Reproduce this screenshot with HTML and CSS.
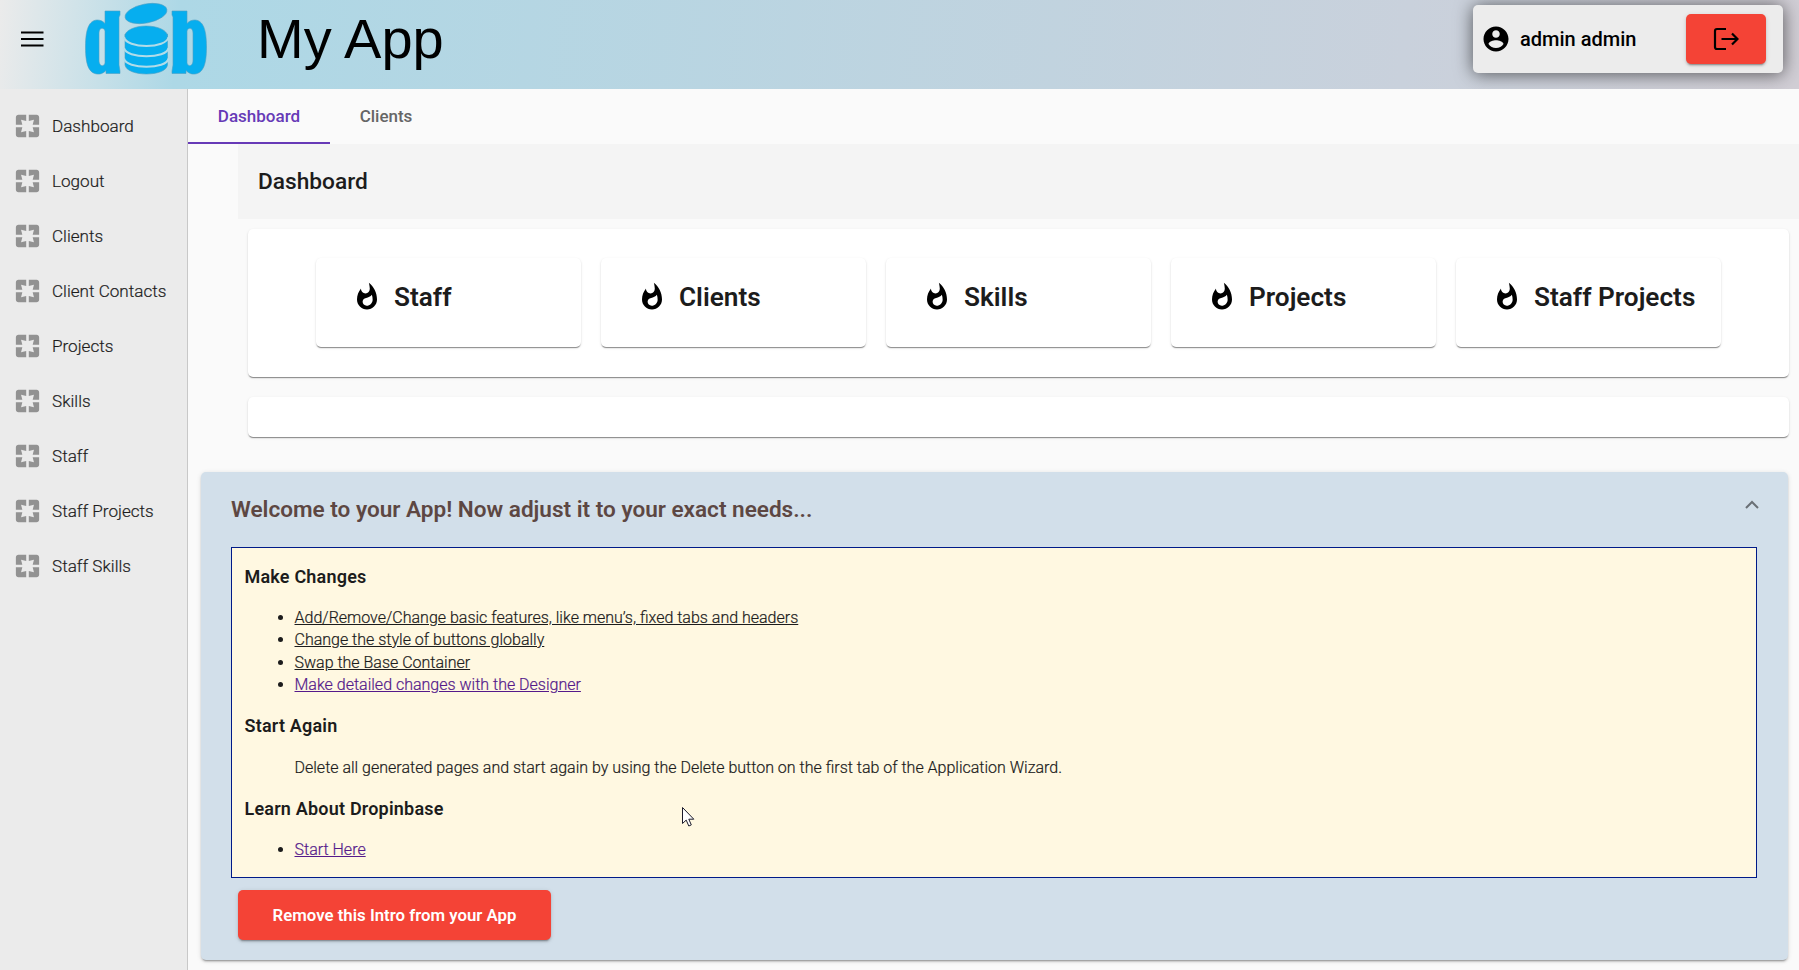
FILE: index.html
```html
<!DOCTYPE html>
<html lang="en">
<head>
<meta charset="utf-8">
<title>My App</title>
<link rel="stylesheet" href="styles.css">
</head>
<body>
<svg class="defs" width="0" height="0">
  <symbol id="pages" viewBox="0 0 24 24" preserveAspectRatio="none"><path d="M3 5v6h5L7 7l4 1V3H5c-1.100 0-2 .9-2 2zm5 8H3v6c0 1.100.9 2 2 2h6v-5l-4 1 1-4zm9 4l-4-1v5h6c1.100 0 2-.9 2-2v-6h-5l1 4zm2-14h-6v5l4-1-1 4h5V5c0-1.100-.9-2-2-2z"/></symbol>
  <symbol id="fire" viewBox="0 0 24 24"><path d="M13.500.67s.74 2.650.74 4.800c0 2.060-1.350 3.730-3.410 3.730-2.070 0-3.630-1.670-3.630-3.730l.03-.36C5.210 7.510 4 10.620 4 14c0 4.420 3.580 8 8 8s8-3.580 8-8C20 8.610 17.410 3.800 13.500.67zM11.710 19c-1.780 0-3.220-1.400-3.220-3.140 0-1.620 1.050-2.760 2.810-3.120 1.770-.36 3.600-1.210 4.620-2.580.39 1.290.59 2.650.59 4.040 0 2.650-2.150 4.800-4.800 4.800z"/></symbol>
</svg>
<header class="header">
  <svg class="burger" width="24" height="18" viewBox="0 0 24 18"><path d="M1 .500h22.500v2H1zM1 7h22.500v2H1zM1 13.500h22.500v2H1z"/></svg>
  <svg class="logo" width="124" height="76" viewBox="84 0 124 76">
    <g fill="#06aeef" stroke="#4a9fc4" stroke-width=".6">
      <path fill-rule="evenodd" d="M105 11h15v4l-1 2v48l1 6v2.500h-14v-3c-3 3-6 4-9 3.500-8-1-11.500-9-11.500-27S89 20.500 97 20c3 0 6 1 8 3.500zM105 31c-1-4-6-4-6 2v27c0 7 5 7 6 3z"/>
      <path fill-rule="evenodd" d="M187 11h-15v4l1 2v48l-1 6v2.500h14v-3c3 3 6 4 9 3.500 8-1 11.500-9 11.500-27S203 20.500 195 20c-3 0-6 1-8 3.500zM187 31c1-4 6-4 6 2v27c0 7-5 7-6 3z"/>
      <path d="M125 34v31c2 12 41 12 42.500 0V34z"/>
      <ellipse cx="146.200" cy="36" rx="21.200" ry="10"/>
      <ellipse cx="146" cy="13.500" rx="21.200" ry="9.500" transform="rotate(-11 146 13.500)"/>
    </g>
    <g fill="none" stroke="#b1dce9" stroke-width="2">
      <path d="M124 37c2 12 43 12 44.500 0M124 48c2 11 43 11 44.500 0M124 58.500c2 11 43 11 44.500 0"/>
    </g>
  </svg>
  <h1 class="app-name">My App</h1>
  <div class="user">
    <svg width="30" height="30" viewBox="0 0 24 24"><path d="M12 2C6.480 2 2 6.480 2 12s4.480 10 10 10 10-4.480 10-10S17.520 2 12 2zm0 3c1.660 0 3 1.340 3 3s-1.340 3-3 3-3-1.340-3-3 1.340-3 3-3zm0 14.200c-2.500 0-4.710-1.280-6-3.220.03-1.990 4-3.080 6-3.080 1.990 0 5.970 1.090 6 3.080-1.290 1.940-3.500 3.220-6 3.220z"/></svg>
    <span class="user-name">admin admin</span>
    <button class="logout"><svg width="26" height="24" viewBox="0 0 26 24"><path d="M13 2H4a2 2 0 0 0-2 2v16a2 2 0 0 0 2 2h9M8.500 12H25M19 6.500l5.500 5.500-5.500 5.500" fill="none" stroke="#000" stroke-width="2.200"/></svg></button>
  </div>
</header>
<div class="body">
  <nav class="side">
    <a class="item"><svg><use href="#pages"/></svg><span>Dashboard</span></a>
    <a class="item"><svg><use href="#pages"/></svg><span>Logout</span></a>
    <a class="item"><svg><use href="#pages"/></svg><span>Clients</span></a>
    <a class="item"><svg><use href="#pages"/></svg><span>Client Contacts</span></a>
    <a class="item"><svg><use href="#pages"/></svg><span>Projects</span></a>
    <a class="item"><svg><use href="#pages"/></svg><span>Skills</span></a>
    <a class="item"><svg><use href="#pages"/></svg><span>Staff</span></a>
    <a class="item"><svg><use href="#pages"/></svg><span>Staff Projects</span></a>
    <a class="item"><svg><use href="#pages"/></svg><span>Staff Skills</span></a>
  </nav>
  <main class="main">
    <div class="tabs"><a class="tab active">Dashboard</a><a class="tab">Clients</a></div>
    <section class="dash">
      <h2 class="title">Dashboard</h2>
      <div class="card cards">
        <div class="card tile"><svg><use href="#fire"/></svg><span>Staff</span></div>
        <div class="card tile"><svg><use href="#fire"/></svg><span>Clients</span></div>
        <div class="card tile"><svg><use href="#fire"/></svg><span>Skills</span></div>
        <div class="card tile"><svg><use href="#fire"/></svg><span>Projects</span></div>
        <div class="card tile"><svg><use href="#fire"/></svg><span>Staff Projects</span></div>
      </div>
      <div class="card empty"></div>
    </section>
    <section class="panel">
      <div class="panel-head">
        <h2>Welcome to your App! Now adjust it to your exact needs...</h2>
        <svg width="16" height="10" viewBox="0 0 16 10"><path d="M2 8l6-6 6 6" fill="none" stroke="#6a7076" stroke-width="2"/></svg>
      </div>
      <div class="note">
        <h3>Make Changes</h3>
        <ul>
          <li><a>Add/Remove/Change basic features, like menu’s, fixed tabs and headers</a></li>
          <li><a>Change the style of buttons globally</a></li>
          <li><a>Swap the Base Container</a></li>
          <li><a class="visited">Make detailed changes with the Designer</a></li>
        </ul>
        <h3>Start Again</h3>
        <p>Delete all generated pages and start again by using the Delete button on the first tab of the Application Wizard.</p>
        <h3>Learn About Dropinbase</h3>
        <ul><li><a class="visited">Start Here</a></li></ul>
      </div>
      <button class="remove">Remove this Intro from your App</button>
    </section>
  </main>
</div>
<svg class="cursor" width="13" height="20" viewBox="0 0 13 20"><path d="M.5.500v16l3.700-3.400 2.600 5.900 2.500-1.100-2.500-5.700h5z" fill="#fff" stroke="#1b1b2b"/></svg>
</body>
</html>
```
FILE: styles.css
```css
* { box-sizing: border-box; }
body { margin: 0; height: 970px; overflow: hidden; background: #fafafa; color: #1c1c1c; font-family: Roboto, sans-serif; }
h1, h2, h3, p, ul { margin: 0; }
svg { display: block; flex: none; }
button { border: 0; border-radius: 5px; background: #f44336; box-shadow: 0 3px 1px -2px rgba(0,0,0,.2), 0 2px 2px rgba(0,0,0,.14), 0 1px 5px rgba(0,0,0,.12); font-family: inherit; }
.defs { position: absolute; }
.header { display: flex; height: 89px; padding-right: 16px; overflow: hidden; background: linear-gradient(95deg, #ebebeb 0, #add8e6 10%, #c9d1dc 78%, #d1ced5 100%); }
.burger { margin: 31px 0 0 20px; }
.logo { margin-left: 40px; }
.app-name { margin: 7px auto 0 49px; font: 400 56px/64px "Liberation Sans", Arial, sans-serif; color: #000; }
.user { display: flex; align-items: center; width: 310px; height: 68px; margin-top: 5px; padding: 0 17px 0 8px; border-radius: 5px; background: #ececec; box-shadow: 0 1px 18px rgba(0,0,0,.6); color: #000; }
.user-name { margin: 0 auto 0 9px; font-size: 20px; font-weight: 500; }
.logout { display: flex; align-items: center; justify-content: center; width: 80px; height: 50px; padding: 0; }
.body { display: flex; height: 881px; }
.side { width: 188px; padding-top: 10px; border-right: 1px solid #c8c8c8; background: #ebebeb; }
.item { display: flex; align-items: center; height: 55px; padding: 0 0 1px 11.500px; font-size: 17.100px; font-weight: 300; -webkit-text-stroke: .2px currentColor; }
.item svg { width: 31px; height: 30px; fill: #929292; }
.item span { margin: -1px 0 0 9.500px; white-space: nowrap; }
.main { flex: 1; min-width: 0; }
.tabs { display: flex; height: 55px; }
.tab { width: 112px; line-height: 55px; text-align: center; font-size: 17px; font-weight: 500; color: #666; }
.tab.active { width: 142px; color: #673ab7; border-bottom: 2px solid #673ab7; }
.dash { padding-left: 50px; }
.title { height: 75px; padding-left: 20px; line-height: 75px; font-size: 22.700px; font-weight: 500; background: #f4f4f4; }
.card { border-radius: 5px; background: #fff; box-shadow: 0 2px 1px -1px rgba(0,0,0,.3), 0 1px 1px rgba(0,0,0,.16), 0 1px 3px rgba(0,0,0,.1); }
.cards { display: flex; gap: 20px; height: 148px; margin: 10px 10px 20px; padding: 29px 68px 0; }
.tile { display: flex; width: 265px; height: 89px; padding: 24px 0 0 36px; font-size: 26.200px; line-height: 30px; font-weight: 600; }
.tile svg { width: 30px; height: 30px; fill: #000; }
.tile span { margin-left: 12px; white-space: nowrap; }
.empty { height: 40px; margin: 0 10px; }
.panel { height: 488px; margin: 35px 11px 0 13px; padding: 0 31px 0 30px; border-radius: 5px; background: #d2dfea; box-shadow: 0 3px 1px -2px rgba(0,0,0,.2), 0 2px 2px rgba(0,0,0,.14), 0 1px 5px rgba(0,0,0,.12); }
.panel-head { display: flex; justify-content: space-between; height: 75px; }
.panel-head h2 { line-height: 76px; font-size: 22.550px; font-weight: 600; color: #5d4743; }
.panel-head svg { margin: 28px -3px 0 0; }
.note { height: 331px; padding: 17.500px 12.500px; border: 1px solid #001a88; background: #fff8e1; font-size: 16px; line-height: 22.600px; font-weight: 300; }
.note li, .note p { -webkit-text-stroke: .2px currentColor; }
.note h3 { line-height: 22.600px; font-size: 18px; font-weight: 600; letter-spacing: .2px; }
.note ul { margin: 18.500px 0; padding-left: 50px; }
.note p { margin: 18.500px 0; padding-left: 50px; }
.note a { text-decoration: underline; }
.note .visited { color: #551a8b; }
.remove { width: 313px; height: 50px; margin: 12px 0 0 7px; padding: 0; color: #fff; font-size: 16.800px; font-weight: 600; }
.cursor { position: absolute; left: 682px; top: 807px; }
```
